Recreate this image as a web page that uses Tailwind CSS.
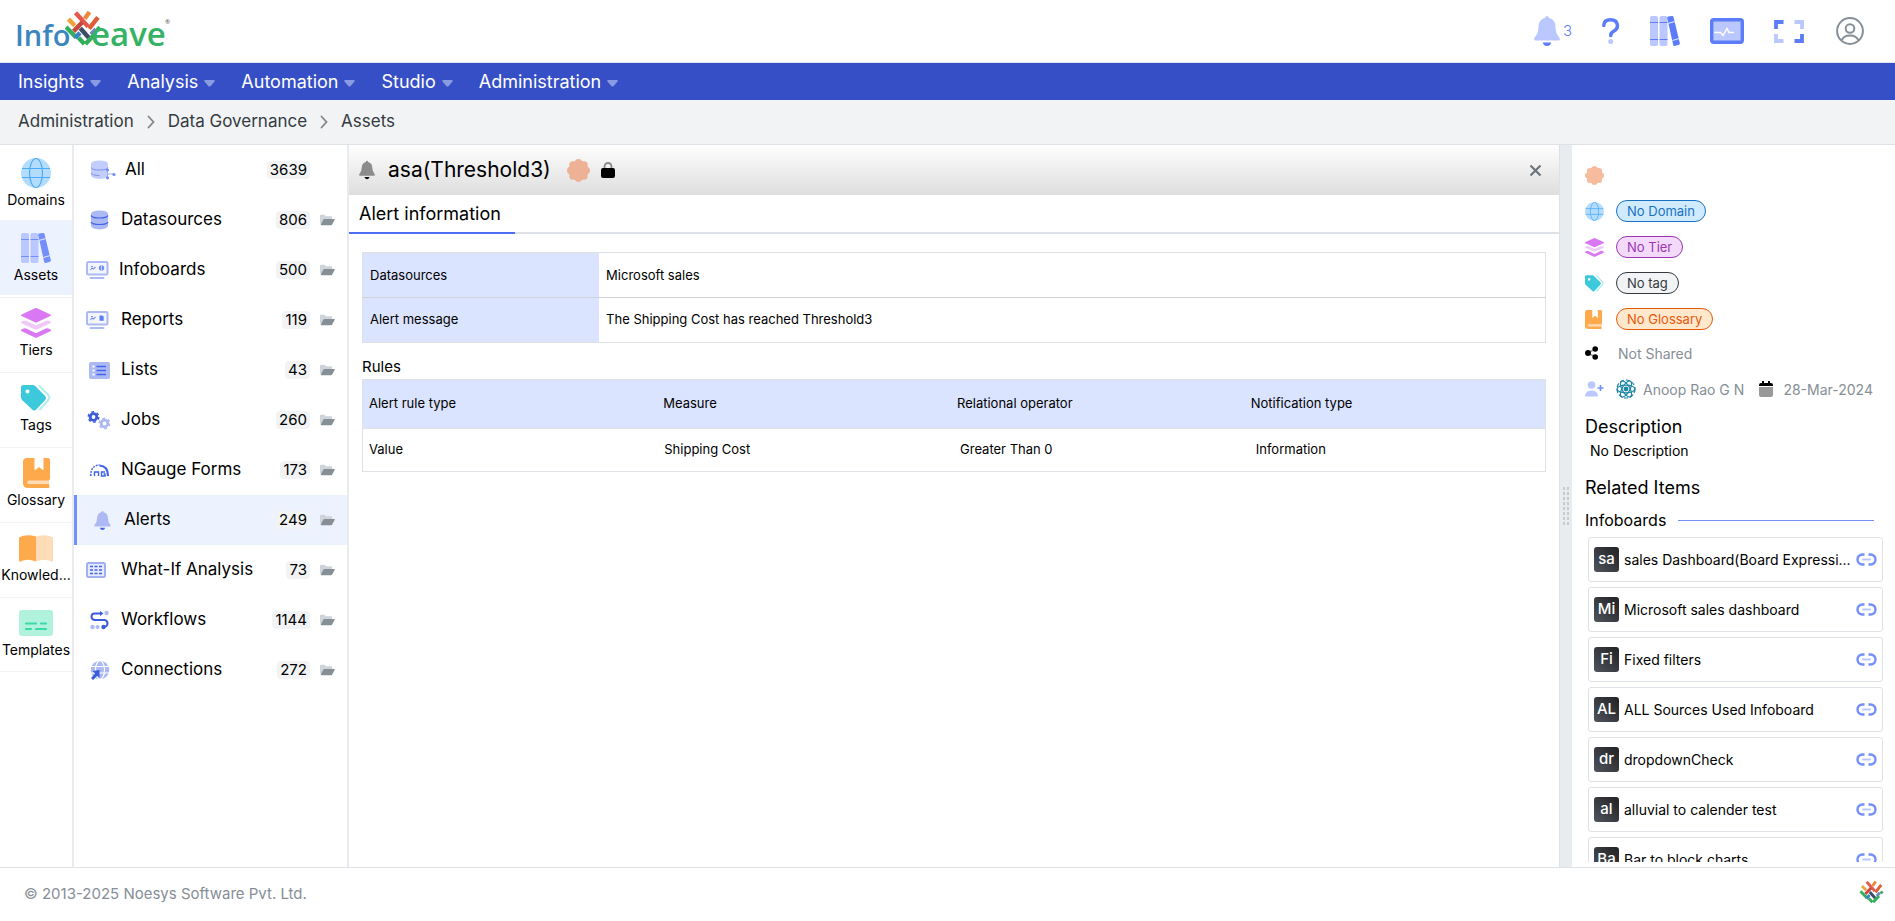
<!DOCTYPE html>
<html lang="en">
<head>
<meta charset="utf-8">
<meta name="viewport" content="width=device-width, initial-scale=1">
<title>Infoveave - Assets</title>
<script src="https://cdn.jsdelivr.net/npm/@tailwindcss/browser@4"></script>
</head>
<body class="flex h-screen flex-col overflow-hidden bg-white font-[Inter,'Open_Sans',sans-serif] text-black">

<!-- Shared icon shapes -->
<svg class="hidden" aria-hidden="true">
  <symbol id="caret" viewBox="0 0 11 7"><path d="M1.500 0h8Q11.500 0 10.500 1.500L6.700 6Q5.500 7.200 4.300 6L.5 1.500Q-.5 0 1.500 0z" fill="#8b9be3"/></symbol>
  <symbol id="chev" viewBox="0 0 8 14"><path d="M1.500 1.500L6.500 7l-5 5.500" fill="none" stroke="#868686" stroke-width="1.800" stroke-linecap="round"/></symbol>
  <symbol id="folder" viewBox="0 0 16 12"><path d="M0 9V1.500Q0 .5 1 .5h3.800l1.500 1.500H12q1 0 1 1V5H4L1 10.500z" fill="#ced4da"/><path d="M4.500 5h10.800q.7 0 .4.700L13 10.800q-.3.700-1.200.7H1.200q-.7 0-.4-.7L3.400 5.700q.3-.7 1.100-.7z" fill="#868e96"/></symbol>
  <symbol id="globe" viewBox="0 0 30 30"><circle cx="15" cy="15" r="15" fill="#b4dcfd"/><g fill="none" stroke="#4dabf7" stroke-width="1.200"><path d="M1 10.500h28M1 19.500h28"/><ellipse cx="15" cy="15" rx="6.500" ry="14.500"/></g></symbol>
  <symbol id="books" viewBox="0 0 30 30"><rect width="8" height="30" rx="1.800" fill="#bac8ff"/><rect x="9.500" width="8" height="30" rx="1.800" fill="#bac8ff"/><path d="M0 6.500h8M9.500 6.500h8M0 23.500h8M9.500 23.500h8" stroke="currentColor" stroke-width="1.200"/><path d="M17.200 2.100Q17 .9 18.200.6L21.800 0q1.300-.2 1.700 1l6.300 26q.3 1.300-.9 1.700l-4 1.200q-1.300.3-1.700-.9z" fill="currentColor"/><path d="M17.800 7.500l7-2M22.300 24.500l7-2" stroke="#dbe4ff" stroke-width="1.300"/></symbol>
  <symbol id="tiers" viewBox="0 0 30 30"><path d="M14 .3q1-.5 2 0l13.400 6.200q1.200.8 0 1.600L16 14.300q-1 .5-2 0L.6 8.100q-1.200-.8 0-1.600z" fill="#da77f2"/><path d="M0 14q.5-1 4.500-1.500L14 17q1 .5 2 0l9.500-4.500Q29.500 13 30 14q.1.900-.6 1.300L16 21.500q-1 .5-2 0L.6 15.300Q-.1 14.900 0 14z" fill="#f0c8fa"/><path d="M0 22q.5-1.200 4.500-1.700L14 24.800q1 .5 2 0l9.500-4.500q4 .5 4.500 1.700 0 .9-.6 1.300L16 29.500q-1 .5-2 0L.6 23.300Q0 22.900 0 22z" fill="#da77f2"/></symbol>
  <symbol id="tags" viewBox="0 0 30 27"><path d="M18.500 1.500l8.800 9q2 2.500 0 5L19 25" fill="none" stroke="#b4ecf1" stroke-width="2" stroke-linecap="round"/><path fill-rule="evenodd" d="M2.500.5h9.300q1.400 0 2.400 1l10 10q1.800 2 0 4l-9 9.600q-2 1.800-4 0L1 15.500q-1-1-1-2.400V3Q0 .5 2.500.5zM6.500 5a2 2 0 1 0 .01 0z" fill="#3bc9db"/></symbol>
  <symbol id="gloss" viewBox="0 0 27 30"><path d="M4 0h7.500v11.300q.2 1 1 .4L16 9l3.500 2.700q.8.600 1-.4V0H25q2 0 2 2v18.500q0 1.200-1 1.800v5q1 .6.600 1.600-.3 1.100-1.600 1.100H4.500Q0 29.600 0 25.500V4Q0 0 4 0z" fill="#ffa94d"/><path d="M5.700 22.500H26V26H5.700q-1.700-.3-1.700-1.700t1.700-1.800z" fill="#ffdcb8"/></symbol>
  <symbol id="seal" viewBox="0 0 22 22"><g fill="currentColor"><circle cx="11" cy="11" r="9.500"/><circle cx="11" cy="3.500" r="3.500"/><circle cx="11" cy="18.500" r="3.500"/><circle cx="3.500" cy="11" r="3.500"/><circle cx="18.500" cy="11" r="3.500"/><circle cx="5.700" cy="5.700" r="3.500"/><circle cx="16.300" cy="5.700" r="3.500"/><circle cx="5.700" cy="16.300" r="3.500"/><circle cx="16.300" cy="16.300" r="3.500"/></g></symbol>
  <symbol id="link" viewBox="0 0 21 13"><path d="M8.500 1.500h-2a5 5 0 0 0 0 10h2M12.500 1.500h2a5 5 0 0 1 0 10h-2" fill="none" stroke="#748ffc" stroke-width="2.400"/><path d="M7 6.500h7" stroke="#bac8ff" stroke-width="2" stroke-linecap="round"/></symbol>
  <symbol id="bell" viewBox="0 0 26 30"><path d="M13 0q1.600 0 1.800 1.800Q21.500 3.500 21.500 11q0 6 3.800 10.500 1.700 3-1.300 3H2q-3 0-1.300-3Q4.500 17 4.500 11q0-7.500 6.700-9.200Q11.400 0 13 0z" fill="var(--a)"/><path d="M8.800 26.500h8.400q-.8 3.500-4.200 3.500t-4.200-3.500z" fill="var(--b)"/></symbol>
  <symbol id="weave" viewBox="0 0 106 104">
    <g fill="none" stroke-width="13">
      <path d="M10 23l19 19" stroke="#f2a23a"/><path d="M31 4l37 41" stroke="#e4574c"/><path d="M72 2L58 22" stroke="#ea8a3a"/><path d="M97 18L71 51" stroke="#dc5d37"/>
      <path d="M51 32L25 59" stroke="#c9463d"/><path d="M3 46l30 31" stroke="#34ae5c"/><path d="M45 50l25 28" stroke="#3d4d66"/><path d="M44 63L30 79" stroke="#3b83c0"/><path d="M91 53L77 68" stroke="#6a86c9"/>
      <path d="M103 47l-8 9" stroke="#34ae5c"/><path d="M87 68L60 96" stroke="#34ae5c"/><path d="M40 78l17 18" stroke="#34ae5c"/>
    </g>
  </symbol>
  <symbol id="board" viewBox="0 0 24 20"><rect x="1" y="2" width="20.500" height="12.500" rx="1.500" fill="#f3f5fc" stroke="#acb9f3" stroke-width="2"/><path d="M4.500 18h13" stroke="#acb9f3" stroke-width="2" stroke-linecap="round"/><path d="M4.500 10l1.500-2 1.500 1L9.500 7M5 6.500h2" fill="none" stroke="#7d93ee" stroke-width="1.200"/></symbol>
</svg>

<header class="flex h-[63px] shrink-0 items-center justify-between border-b border-[#dee2e6] pl-4 pr-[31px]">
  <a href="#" aria-label="Infoveave home">
    <svg class="h-[42px] w-[158px] overflow-visible" viewBox="0 0 158 42">
      <use href="#weave" x="49" y="1" width="36" height="36"/>
      <g font-family="'Open Sans',sans-serif" font-weight="600"><text x="-1" y="36" font-size="29" fill="#3b86bf">Info</text><text x="75" y="36" font-size="33" fill="#36b264">eave</text><text x="149" y="14" font-size="6" fill="#555">®</text></g>
    </svg>
  </a>
  <div class="flex items-center gap-[30px] text-[#5c7cfa]">
    <button class="flex items-center gap-[3px]" aria-label="Notifications"><svg class="h-[30px] w-[26px] [--a:#bac8ff] [--b:#5c7cfa]"><use href="#bell"/></svg><span class="text-[15px] font-light">3</span></button>
    <button aria-label="Help"><svg class="h-[26px] w-[18px]" viewBox="0 0 18 26"><path d="M1.800 7.500Q2 1.800 8.500 1.800t7 5.700q0 3.500-3.500 5.500t-3.200 4.500" fill="none" stroke="#5c7cfa" stroke-width="3.500" stroke-linecap="round"/><circle cx="8.700" cy="23.500" r="2.500" fill="#bac8ff"/></svg></button>
    <button aria-label="Library"><svg class="size-[30px]"><use href="#books"/></svg></button>
    <button aria-label="Monitor"><svg class="h-[26px] w-[34px]" viewBox="0 0 34 26"><rect x="1.700" y="1.700" width="30.600" height="22.600" rx="2" fill="#bac8ff" stroke="#5c7cfa" stroke-width="3.400"/><path d="M4 14.500h6.500l2.500 3 4-7 2 4h5" fill="none" stroke="#fff" stroke-width="1.500"/></svg></button>
    <button aria-label="Full screen"><svg class="h-[23px] w-[30px]" viewBox="0 0 30 23" fill="none" stroke-width="3.800"><path d="M2 9V2h7.500M28 14v7h-7.500" stroke="#5c7cfa"/><path d="M20.500 2H28v7M2 14v7h7.500" stroke="#bac8ff"/></svg></button>
    <button class="ml-[2px]" aria-label="Account"><svg class="size-7" viewBox="0 0 28 28" fill="none" stroke="#868e96" stroke-width="2"><circle cx="14" cy="14" r="12.900"/><circle cx="14" cy="11.500" r="4.300"/><path d="M5.500 23.500Q7.500 18.500 14 18.500t8.500 5"/></svg></button>
  </div>
</header>

<nav class="flex h-[37px] shrink-0 items-center gap-[26px] bg-[#364fc7] pl-[18px] text-[18px] text-white">
  <a href="#" class="flex items-center gap-[6px]">Insights <svg class="mt-1 h-[7px] w-[11px]"><use href="#caret"/></svg></a>
  <a href="#" class="flex items-center gap-[6px]">Analysis <svg class="mt-1 h-[7px] w-[11px]"><use href="#caret"/></svg></a>
  <a href="#" class="flex items-center gap-[6px]">Automation <svg class="mt-1 h-[7px] w-[11px]"><use href="#caret"/></svg></a>
  <a href="#" class="flex items-center gap-[6px]">Studio <svg class="mt-1 h-[7px] w-[11px]"><use href="#caret"/></svg></a>
  <a href="#" class="flex items-center gap-[6px]">Administration <svg class="mt-1 h-[7px] w-[11px]"><use href="#caret"/></svg></a>
</nav>

<nav aria-label="Breadcrumb" class="flex h-[45px] shrink-0 items-center gap-[13px] border-b border-[#dee2e6] bg-[#f1f3f5] pb-px pl-[18px] text-[17px] text-[#343a40]">
  <a href="#">Administration</a><svg class="h-[14px] w-2"><use href="#chev"/></svg>
  <a href="#">Data Governance</a><svg class="h-[14px] w-2"><use href="#chev"/></svg>
  <a href="#">Assets</a>
</nav>

<main class="flex min-h-0 flex-1">
  <nav aria-label="Governance" class="w-[74px] shrink-0 border-r-2 border-[#e9ecef] text-[14px]">
    <a href="#" class="flex h-[75px] flex-col items-center pt-[13px]"><svg class="size-[30px] shrink-0"><use href="#globe"/></svg><span class="mt-px">Domains</span></a>
    <a href="#" class="flex h-[75px] flex-col items-center bg-[#edf2ff] pt-[13px] text-[#748ffc]"><svg class="size-[30px] shrink-0"><use href="#books"/></svg><span class="mt-px text-black">Assets</span></a>
    <div class="flex flex-col pt-[2px]">
      <a href="#" class="flex h-[75px] flex-col items-center border-t border-[#f1f3f5] pt-[10px]"><svg class="size-[30px] shrink-0"><use href="#tiers"/></svg><span class="mt-px">Tiers</span></a>
      <a href="#" class="flex h-[75px] flex-col items-center border-t border-[#f1f3f5] pt-[10px]"><svg class="h-[30px] w-[30px] shrink-0"><use href="#tags"/></svg><span class="mt-px">Tags</span></a>
      <a href="#" class="flex h-[75px] flex-col items-center border-t border-[#f1f3f5] pt-[10px]"><svg class="h-[30px] w-[27px] shrink-0"><use href="#gloss"/></svg><span class="mt-px">Glossary</span></a>
      <a href="#" class="flex h-[75px] flex-col items-center border-t border-[#f1f3f5] pt-[10px]"><svg class="h-[30px] w-[34px] shrink-0" viewBox="0 0 34 30"><path d="M0 4.500Q7 .5 17 3.500v25Q8 25 1.500 28.500 0 29 0 27.500z" fill="#ffa94d"/><path d="M34 4.500Q27 .5 17 3.500v25q9-3.500 15.500 0 1.500.5 1.500-1z" fill="#ffdcb8"/></svg><span class="mt-px">Knowled...</span></a>
      <a href="#" class="flex h-[75px] flex-col items-center border-y border-[#f1f3f5] pt-[10px]"><svg class="h-[30px] w-[34px] shrink-0" viewBox="0 0 34 30"><rect y="2" width="34" height="26" rx="3" fill="#b0f2dc"/><path d="M7 15.500h10M22 15.500h5M7 21h5M17 21h10" stroke="#38d9a9" stroke-width="2.200" stroke-linecap="round"/></svg><span class="mt-px">Templates</span></a>
    </div>
  </nav>

  <nav aria-label="Asset types" class="w-[275px] shrink-0 border-r-2 border-[#e9ecef] text-[17px]">
    <a href="#" class="flex h-[50px] items-center pl-3 pr-[12px]"><svg class="mr-[9px] h-5 w-[30px] shrink-0" viewBox="0 0 30 20"><path d="M5 4v11q0 3.500 8.500 4 8.500-.5 8.500-4V4q0-3.500-8.500-3.500T5 4z" fill="#c3cdfb"/><path d="M5 7.500q1 2.500 8.500 2.500T22 7.500M5 13q1 2.500 8.500 2.500" fill="none" stroke="#7d93ee"/><path d="M21.500 10v8M21.500 14h6" stroke="#a0b0f3"/><circle cx="21.500" cy="10" r="1.600" fill="#748ffc"/><circle cx="21.500" cy="17.800" r="1.600" fill="#748ffc"/><circle cx="28" cy="14.500" r="1.600" fill="#748ffc"/></svg>All<span class="ml-auto mr-[25px] rounded bg-[#f1f3f5] px-[3px] text-[15px] leading-[18px]">3639</span></a>
    <a href="#" class="flex h-[50px] items-center pl-3 pr-[12px]"><svg class="mr-[11px] h-5 w-6 shrink-0" viewBox="0 0 24 20"><path d="M5 4v11.500Q5 19 13.500 19.500q8.500-.5 8.500-4V4q0-3.500-8.500-3.500T5 4z" fill="#acb9f3"/><path d="M5 5.500q1 2.500 8.500 2.500T22 5.500M5 12q1 2.500 8.500 2.500T22 12" fill="none" stroke="#4263eb" stroke-width="1.200"/></svg>Datasources<span class="ml-auto rounded bg-[#f1f3f5] px-[3px] text-[15px] leading-[18px]">806</span><svg class="ml-[10px] h-3 w-[15px]"><use href="#folder"/></svg></a>
    <a href="#" class="flex h-[50px] items-center pl-3 pr-[12px]"><svg class="mr-[9px] h-5 w-6 shrink-0" viewBox="0 0 24 20"><use href="#board" width="24" height="20"/><circle cx="15.500" cy="8" r="2.700" fill="#748ffc"/><path d="M15.500 5.300v5.400" stroke="#dbe4ff" stroke-width=".8"/></svg>Infoboards<span class="ml-auto rounded bg-[#f1f3f5] px-[3px] text-[15px] leading-[18px]">500</span><svg class="ml-[10px] h-3 w-[15px]"><use href="#folder"/></svg></a>
    <a href="#" class="flex h-[50px] items-center pl-3 pr-[12px]"><svg class="mr-[11px] h-5 w-6 shrink-0" viewBox="0 0 24 20"><use href="#board" width="24" height="20"/><path d="M13.500 5.500h3l1.200 1.200v4h-4.200z" fill="#5c7cfa"/></svg>Reports<span class="ml-auto rounded bg-[#f1f3f5] px-[3px] text-[15px] leading-[18px]">119</span><svg class="ml-[10px] h-3 w-[15px]"><use href="#folder"/></svg></a>
    <a href="#" class="flex h-[50px] items-center pl-3 pr-[12px]"><svg class="mr-[11px] h-5 w-6 shrink-0" viewBox="0 0 24 20"><rect x="3" y="2" width="21" height="17" rx="2" fill="#acb9f3"/><path d="M10.500 6.500h9.500M10.500 10.500h9.500M10.500 14.500h9.500" stroke="#4263eb" stroke-width="1.400"/><path d="M6.500 6.500h2M6.500 10.500h2M6.500 14.500h2" stroke="#fff" stroke-width="2"/></svg>Lists<span class="ml-auto rounded bg-[#f1f3f5] px-[3px] text-[15px] leading-[18px]">43</span><svg class="ml-[10px] h-3 w-[15px]"><use href="#folder"/></svg></a>
    <a href="#" class="flex h-[50px] items-center pl-3 pr-[12px]"><svg class="mr-[11px] h-5 w-6 shrink-0" viewBox="0 0 24 20" fill="none"><circle cx="7.500" cy="7" r="3.300" stroke="#3b5bdb" stroke-width="2.800"/><circle cx="7.500" cy="7" r="5.200" stroke="#3b5bdb" stroke-width="1.600" stroke-dasharray="2.700 2.740"/><circle cx="18.500" cy="13.500" r="3.300" stroke="#acb9f3" stroke-width="2.800"/><circle cx="18.500" cy="13.500" r="5.200" stroke="#acb9f3" stroke-width="1.600" stroke-dasharray="2.700 2.740"/></svg>Jobs<span class="ml-auto rounded bg-[#f1f3f5] px-[3px] text-[15px] leading-[18px]">260</span><svg class="ml-[10px] h-3 w-[15px]"><use href="#folder"/></svg></a>
    <a href="#" class="flex h-[50px] items-center pl-3 pr-[12px]"><svg class="mr-[11px] h-5 w-6 shrink-0" viewBox="0 0 24 20" fill="none" stroke="#4263eb"><path d="M4.800 16Q4.500 5.500 13.500 5" stroke-width="1.500" stroke-dasharray="2 1"/><path d="M13.500 5.500q8.500.5 8.500 10.500" stroke-width="2.200"/><path d="M8.500 16v-4h4v4M19 12h-3.500v4H19v-2h-1.500" stroke-width="1.400"/></svg>NGauge Forms<span class="ml-auto rounded bg-[#f1f3f5] px-[3px] text-[15px] leading-[18px]">173</span><svg class="ml-[10px] h-3 w-[15px]"><use href="#folder"/></svg></a>
    <a href="#" aria-current="page" class="flex h-[50px] items-center border-l-[3px] border-[#748ffc] bg-[#edf2ff] pl-3 pr-[12px]"><svg class="mr-[11px] h-5 w-6 shrink-0 [--a:#acb9f3] [--b:#4263eb]" viewBox="0 0 24 20"><use href="#bell" x="5" y="1" width="17" height="19"/></svg>Alerts<span class="ml-auto rounded bg-[#f1f3f5] px-[3px] text-[15px] leading-[18px]">249</span><svg class="ml-[10px] h-3 w-[15px]"><use href="#folder"/></svg></a>
    <a href="#" class="flex h-[50px] items-center pl-3 pr-[12px]"><svg class="mr-[11px] h-5 w-6 shrink-0" viewBox="0 0 24 20"><rect x="1" y="3" width="18" height="14" rx="1.500" fill="#e5eaff" stroke="#a0b0f3" stroke-width="2"/><path d="M4 6.500h12M4 10h12M4 13.500h12" stroke="#4263eb" stroke-width="1.600" stroke-dasharray="3 1.500"/></svg>What-If Analysis<span class="ml-auto rounded bg-[#f1f3f5] px-[3px] text-[15px] leading-[18px]">73</span><svg class="ml-[10px] h-3 w-[15px]"><use href="#folder"/></svg></a>
    <a href="#" class="flex h-[50px] items-center pl-3 pr-[12px]"><svg class="mr-[11px] h-5 w-6 shrink-0" viewBox="0 0 24 20"><path d="M15 3.500H8.500q-3 0-3 3t3 3.500h10q3 .5 3 3.500t-4 3.500" fill="none" stroke="#3b5bdb" stroke-width="2"/><path d="M14 1l3.500 2.500L14 6z" fill="#3b5bdb"/><circle cx="17.500" cy="17" r="2.200" fill="#3b5bdb"/><circle cx="20.500" cy="3" r="2.200" fill="#acb9f3"/><circle cx="6.500" cy="17" r="2.200" fill="#acb9f3"/><circle cx="11.500" cy="17" r="2" fill="#acb9f3"/></svg>Workflows<span class="ml-auto rounded bg-[#f1f3f5] px-[3px] text-[15px] leading-[18px]">1144</span><svg class="ml-[10px] h-3 w-[15px]"><use href="#folder"/></svg></a>
    <a href="#" class="flex h-[50px] items-center pl-3 pr-[12px]"><svg class="mr-[11px] h-5 w-6 shrink-0" viewBox="0 0 24 20"><circle cx="14" cy="10" r="9.300" fill="#acb9f3"/><g fill="none" stroke="#fff" stroke-width="1.200"><path d="M4 6.500h20M4 13h20"/><ellipse cx="14" cy="10" rx="4.500" ry="9.300"/></g><path d="M13.500 10v8l-2.200-2.200-4.300 4.200-2-2 4.300-4.500L6.500 11z" fill="#3b5bdb"/></svg>Connections<span class="ml-auto rounded bg-[#f1f3f5] px-[3px] text-[15px] leading-[18px]">272</span><svg class="ml-[10px] h-3 w-[15px]"><use href="#folder"/></svg></a>
  </nav>

  <section class="min-w-0 flex-1">
    <div class="flex h-[50px] items-center bg-linear-to-b from-[#fefefe] to-[#dedede] pl-[10px] pr-[17px]">
      <svg class="h-[20px] w-[16px] [--a:#8c8c8c] [--b:#000]"><use href="#bell"/></svg>
      <h1 class="ml-[13px] text-[21px]">asa(Threshold3)</h1>
      <svg class="ml-4 size-[23px] text-[#edb296]"><use href="#seal"/></svg>
      <svg class="ml-[11px] h-[16px] w-[14px]" viewBox="0 0 14 16"><path d="M3.500 8V5q0-4 3.500-4t3.500 4v3" fill="none" stroke="#8c8c8c" stroke-width="1.800"/><rect y="6" width="14" height="10" rx="2" fill="#000"/></svg>
      <button class="ml-auto" aria-label="Close"><svg class="size-[13px]" viewBox="0 0 13 13"><path d="M1.500 1.500l10 10M11.500 1.500l-10 10" stroke="#6c757d" stroke-width="2.200"/></svg></button>
    </div>
    <div role="tablist" class="flex h-[39px] border-b-2 border-[#dee2e6]">
      <button role="tab" aria-selected="true" class="h-[39px] w-[166px] border-b-2 border-[#4c6ef5] pl-[10px] text-left text-[18px]">Alert information</button>
    </div>
    <div class="px-[13px] pt-[18px]">
      <table class="w-full table-fixed border-collapse border border-[#dee2e6] text-[13px]">
        <colgroup><col class="w-1/5"><col></colgroup>
        <tr class="h-[45px] border-b border-[#ced4da]"><th class="bg-[#dbe4ff] pl-[7px] pt-px text-left font-normal">Datasources</th><td class="pl-[7px] pt-px">Microsoft sales</td></tr>
        <tr class="h-[45px]"><th class="bg-[#dbe4ff] pl-[7px] text-left font-normal">Alert message</th><td class="pl-[7px]">The Shipping Cost has reached Threshold3</td></tr>
      </table>
      <h2 class="mb-px mt-[13px] text-[15px] leading-[22px]">Rules</h2>
      <table class="w-full table-fixed border-collapse border border-[#dee2e6] text-[13px]">
        <thead><tr class="h-[49px] border-b border-[#dee2e6] bg-[#dbe4ff] text-left"><th class="pl-[6px] font-normal">Alert rule type</th><th class="pl-[5px] font-normal">Measure</th><th class="pl-[3px] font-normal">Relational operator</th><th class="pl-px font-normal">Notification type</th></tr></thead>
        <tbody><tr class="h-[43px]"><td class="pl-[6px]">Value</td><td class="pl-[6px]">Shipping Cost</td><td class="pl-[6px]">Greater Than 0</td><td class="pl-[6px]">Information</td></tr></tbody>
      </table>
    </div>
  </section>

  <div role="separator" class="flex w-[13px] shrink-0 items-center justify-center border-l border-[#dee2e6] bg-[#e9ecef]">
    <svg class="h-[38px] w-[6px]" viewBox="0 0 6 38"><path d="M1 0v38M5 0v38" stroke="#c9cacc" stroke-width="2" stroke-dasharray="3 2"/></svg>
  </div>

  <aside class="flex w-[323px] shrink-0 flex-col pb-[5px] pl-[13px] pr-3 pt-3">
    <div class="flex h-9 shrink-0 items-center"><svg class="size-[19px] text-[#f7bc9d]"><use href="#seal"/></svg></div>
    <div class="flex h-9 shrink-0 items-center gap-3"><svg class="size-[19px]"><use href="#globe"/></svg><span class="rounded-full border border-[#1971c2] bg-[#d0ebff] px-[10px] text-[13px] leading-5 text-[#1971c2]">No Domain</span></div>
    <div class="flex h-9 shrink-0 items-center gap-3"><svg class="size-[19px]"><use href="#tiers"/></svg><span class="rounded-full border border-[#9c36b5] bg-[#f3d9fa] px-[10px] text-[13px] leading-5 text-[#9c36b5]">No Tier</span></div>
    <div class="flex h-9 shrink-0 items-center gap-3"><svg class="size-[19px]"><use href="#tags"/></svg><span class="rounded-full border border-[#343a40] bg-[#f1f3f5] px-[10px] text-[13px] leading-5 text-[#343a40]">No tag</span></div>
    <div class="flex h-9 shrink-0 items-center gap-[14px]"><svg class="h-[19px] w-[17px]"><use href="#gloss"/></svg><span class="rounded-full border border-[#e8590c] bg-[#ffe8cc] px-[10px] text-[13px] leading-5 text-[#e8590c]">No Glossary</span></div>
    <div class="flex h-8 shrink-0 items-center gap-5 text-[14px] text-[#868e96]"><svg class="h-[14px] w-[13px]" viewBox="0 0 13 14"><path d="M3 7l7-4M3 7l7 4" stroke="#999" stroke-width="1.500"/><circle cx="3" cy="7" r="3"/><circle cx="10.200" cy="3" r="2.800"/><circle cx="10.200" cy="11" r="2.800"/></svg>Not Shared</div>
    <div class="flex h-10 shrink-0 items-center text-[14px] text-[#868e96]">
      <svg class="h-[16px] w-[19px]" viewBox="0 0 19 16"><circle cx="6.500" cy="4" r="3.800" fill="#bac8ff"/><path d="M0 15.500Q0 9.500 6.500 9.500T13 15.500z" fill="#bac8ff"/><path d="M15.500 4v6M12.500 7h6" stroke="#748ffc" stroke-width="1.600"/></svg>
      <svg class="ml-3 size-5" viewBox="0 0 20 20" fill="none" stroke="#1c86a3" stroke-width="1.200"><circle cx="10" cy="10" r="9" stroke-dasharray="4 2"/><ellipse cx="10" cy="10" rx="9" ry="3.800"/><ellipse cx="10" cy="10" rx="9" ry="3.800" transform="rotate(60 10 10)"/><ellipse cx="10" cy="10" rx="9" ry="3.800" transform="rotate(120 10 10)"/><circle cx="10" cy="10" r="1.800" fill="#1c86a3"/></svg>
      <span class="ml-[7px]">Anoop Rao G N</span>
      <svg class="ml-auto h-[16px] w-[14px]" viewBox="0 0 14 16"><path d="M0 6h14v8q0 2-2 2H2q-2 0-2-2z" fill="#999"/><path d="M0 5V4q0-2 2-2h1V0h2v2h4V0h2v2h1q2 0 2 2v1z" fill="#000"/></svg>
      <span class="ml-[10px] mr-[10px]">28-Mar-2024</span>
    </div>
    <h2 class="mt-1 shrink-0 text-[18px] leading-7">Description</h2>
    <p class="shrink-0 pl-[5px] text-[14px] leading-5">No Description</p>
    <h2 class="mt-[13px] shrink-0 text-[18px] leading-7">Related Items</h2>
    <div class="mt-[6px] flex h-6 shrink-0 items-center gap-3"><h3 class="text-[16px]">Infoboards</h3><span class="mr-[9px] h-px flex-1 bg-[#748ffc]"></span></div>
    <ul class="mt-[5px] flex min-h-0 flex-col gap-[5px] overflow-hidden pl-[3px] text-[14px]">
      <li class="flex h-[45px] shrink-0 items-center rounded-[3px] border border-[#dee2e6] px-[5px]"><span class="grid size-[25px] shrink-0 place-items-center rounded-[3px] bg-linear-to-tr from-[#50545c] to-[#212225] text-[15px] font-medium text-white">sa</span><a href="#" class="ml-[5px] min-w-0 flex-1 truncate">sales Dashboard(Board Expressi...</a><svg class="ml-[3px] h-[13px] w-[21px] shrink-0"><use href="#link"/></svg></li>
      <li class="flex h-[45px] shrink-0 items-center rounded-[3px] border border-[#dee2e6] px-[5px]"><span class="grid size-[25px] shrink-0 place-items-center rounded-[3px] bg-linear-to-tr from-[#50545c] to-[#212225] text-[15px] font-medium text-white">Mi</span><a href="#" class="ml-[5px] min-w-0 flex-1 truncate">Microsoft sales dashboard</a><svg class="ml-[3px] h-[13px] w-[21px] shrink-0"><use href="#link"/></svg></li>
      <li class="flex h-[45px] shrink-0 items-center rounded-[3px] border border-[#dee2e6] px-[5px]"><span class="grid size-[25px] shrink-0 place-items-center rounded-[3px] bg-linear-to-tr from-[#50545c] to-[#212225] text-[15px] font-medium text-white">Fi</span><a href="#" class="ml-[5px] min-w-0 flex-1 truncate">Fixed filters</a><svg class="ml-[3px] h-[13px] w-[21px] shrink-0"><use href="#link"/></svg></li>
      <li class="flex h-[45px] shrink-0 items-center rounded-[3px] border border-[#dee2e6] px-[5px]"><span class="grid size-[25px] shrink-0 place-items-center rounded-[3px] bg-linear-to-tr from-[#50545c] to-[#212225] text-[15px] font-medium text-white">AL</span><a href="#" class="ml-[5px] min-w-0 flex-1 truncate">ALL Sources Used Infoboard</a><svg class="ml-[3px] h-[13px] w-[21px] shrink-0"><use href="#link"/></svg></li>
      <li class="flex h-[45px] shrink-0 items-center rounded-[3px] border border-[#dee2e6] px-[5px]"><span class="grid size-[25px] shrink-0 place-items-center rounded-[3px] bg-linear-to-tr from-[#50545c] to-[#212225] text-[15px] font-medium text-white">dr</span><a href="#" class="ml-[5px] min-w-0 flex-1 truncate">dropdownCheck</a><svg class="ml-[3px] h-[13px] w-[21px] shrink-0"><use href="#link"/></svg></li>
      <li class="flex h-[45px] shrink-0 items-center rounded-[3px] border border-[#dee2e6] px-[5px]"><span class="grid size-[25px] shrink-0 place-items-center rounded-[3px] bg-linear-to-tr from-[#50545c] to-[#212225] text-[15px] font-medium text-white">al</span><a href="#" class="ml-[5px] min-w-0 flex-1 truncate">alluvial to calender test</a><svg class="ml-[3px] h-[13px] w-[21px] shrink-0"><use href="#link"/></svg></li>
      <li class="flex h-[45px] shrink-0 items-center rounded-[3px] border border-[#dee2e6] px-[5px]"><span class="grid size-[25px] shrink-0 place-items-center rounded-[3px] bg-linear-to-tr from-[#50545c] to-[#212225] text-[15px] font-medium text-white">Ba</span><a href="#" class="ml-[5px] min-w-0 flex-1 truncate">Bar to block charts</a><svg class="ml-[3px] h-[13px] w-[21px] shrink-0"><use href="#link"/></svg></li>
    </ul>
  </aside>
</main>

<footer class="flex h-[54px] shrink-0 items-center justify-between border-t border-[#dee2e6] pl-6 pr-[11px] text-[15px] text-[#868e96]">
  <p>© 2013-2025 Noesys Software Pvt. Ltd.</p>
  <svg class="mb-1 h-[23px] w-[25px]"><use href="#weave"/></svg>
</footer>
</body>
</html>
